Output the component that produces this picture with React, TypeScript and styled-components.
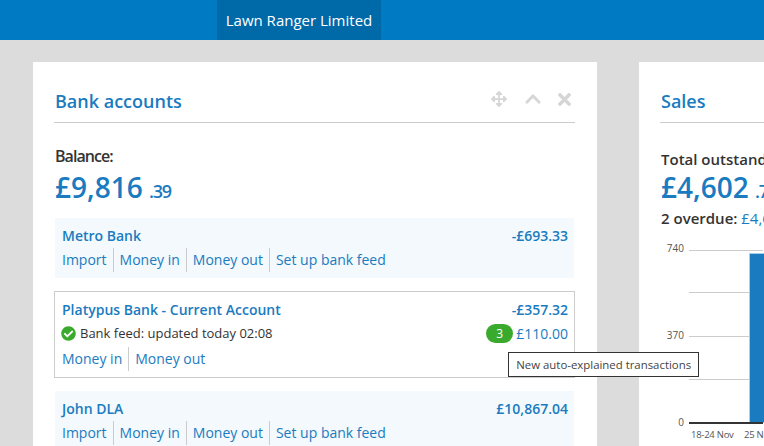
import { createGlobalStyle, styled } from "styled-components";
import { FaArrowsAlt, FaCheckCircle, FaChevronUp, FaTimes } from "react-icons/fa";

const BLUE = "#1a7bc0";

const GlobalStyle = createGlobalStyle`
  html, body {
    margin: 0;
    height: 100%;
    overflow: hidden;
    background: #dcdcdc;
    font-family: "Open Sans", "Liberation Sans", sans-serif;
    color: #333;
  }
`;

type Account = {
  name: string;
  amount: string;
  links: string[];
};

const metro: Account = {
  name: "Metro Bank",
  amount: "-£693.33",
  links: ["Import", "Money in", "Money out", "Set up bank feed"],
};

const john: Account = {
  name: "John DLA",
  amount: "£10,867.04",
  links: ["Import", "Money in", "Money out", "Set up bank feed"],
};

function Links({ items }: { items: string[] }) {
  return (
    <LinkRow>
      {items.map((item) => (
        <ActionLink key={item}>{item}</ActionLink>
      ))}
    </LinkRow>
  );
}

function Chart() {
  const grid = [9.5, 51.5, 95.5, 138.5];
  return (
    <ChartSvg width="103" height="205" viewBox="0 0 103 205">
      {grid.map((y) => (
        <line key={y} x1="29" x2="103" y1={y} y2={y} stroke="#ccc" />
      ))}
      <rect x="89.5" y="12.5" width="15" height="169" fill="#1a7bc0" stroke="#a9cde6" />
      <line x1="29" x2="103" y1="182" y2="182" stroke="#333" strokeWidth="2" />
      <g fontSize="10" fill="#555" fontFamily="Open Sans">
        <text x="24" y="11" textAnchor="end">740</text>
        <text x="24" y="98" textAnchor="end">370</text>
        <text x="24" y="185" textAnchor="end">0</text>
      </g>
      <g fontSize="9.5" fill="#555" fontFamily="Open Sans" letterSpacing="-0.25">
        <text x="31" y="197">18-24 Nov</text>
        <text x="84" y="197">25 Nov</text>
      </g>
    </ChartSvg>
  );
}

export default function App() {
  return (
    <>
      <GlobalStyle />
      <Header>
        <CompanyTab>Lawn Ranger Limited</CompanyTab>
      </Header>
      <Main>
        <Card>
          <CardHead>
            <CardTitle>Bank accounts</CardTitle>
            <CardTools>
              <FaArrowsAlt size={16} />
              <FaChevronUp size={18} />
              <FaTimes size={19} />
            </CardTools>
          </CardHead>
          <BalanceLabel>Balance:</BalanceLabel>
          <BigAmount>
            £9,816 <small>.39</small>
          </BigAmount>
          <AccountList>
            <AccountRow>
              <AccountTop>
                <span>{metro.name}</span>
                <span>{metro.amount}</span>
              </AccountTop>
              <Links items={metro.links} />
            </AccountRow>
            <AccountRow $outlined>
              <AccountTop>
                <span>Platypus Bank - Current Account</span>
                <span>-£357.32</span>
              </AccountTop>
              <FeedRow>
                <FeedStatus>
                  <FaCheckCircle size={15} color="#3aaa2c" />
                  Bank feed: updated today 02:08
                </FeedStatus>
                <FeedAmount>
                  <Badge>3</Badge>
                  £110.00
                  <Tooltip>New auto-explained transactions</Tooltip>
                </FeedAmount>
              </FeedRow>
              <Links items={["Money in", "Money out"]} />
            </AccountRow>
            <AccountRow>
              <AccountTop>
                <span>{john.name}</span>
                <span>{john.amount}</span>
              </AccountTop>
              <Links items={john.links} />
            </AccountRow>
          </AccountList>
        </Card>
        <Card>
          <CardHead>
            <CardTitle>Sales</CardTitle>
          </CardHead>
          <SalesLabel>Total outstanding:</SalesLabel>
          <BigAmount>
            £4,602 <small>.78</small>
          </BigAmount>
          <Overdue>
            2 overdue: <span>£4,602.78</span>
          </Overdue>
          <Chart />
        </Card>
      </Main>
    </>
  );
}

const Header = styled.header`
  display: flex;
  height: 40px;
  padding-left: 217px;
  background: #007bc3;
`;

const CompanyTab = styled.div`
  display: flex;
  align-items: center;
  justify-content: center;
  width: 164px;
  background: #0069a8;
  color: #fff;
  font-size: 15px;
`;

const Main = styled.main`
  display: flex;
  gap: 42px;
  box-sizing: border-box;
  width: 100vw;
  height: calc(100vh - 40px);
  padding: 22px 0 0 33px;
  overflow: hidden;
`;

const Card = styled.section`
  flex: none;
  box-sizing: border-box;
  width: 564px;
  height: 500px;
  padding: 22px 22px 0 21px;
  background: #fff;
`;

const CardHead = styled.div`
  display: flex;
  justify-content: space-between;
  align-items: center;
  height: 38px;
  border-bottom: 1px solid #ccc;
  padding-left: 1px;
`;

const CardTitle = styled.h2`
  margin: 0 0 4px;
  color: ${BLUE};
  font-size: 18px;
  font-weight: 600;
  line-height: 34px;
`;

const CardTools = styled.div`
  display: flex;
  align-items: center;
  gap: 13px;
  padding-right: 1px;
  margin-bottom: 8px;
  color: #d6d6d6;
  svg:first-child {
    margin-right: 4px;
  }
`;

const BalanceLabel = styled.div`
  margin: 23px 0 0 1px;
  font-size: 16px;
  font-weight: 600;
  line-height: 20px;
  letter-spacing: -0.95px;
`;

const SalesLabel = styled(BalanceLabel)`
  margin: 26px 0 -3px 1px;
  font-size: 15px;
  letter-spacing: 0;
  white-space: nowrap;
`;

const BigAmount = styled.div`
  margin-left: 1px;
  color: ${BLUE};
  font-size: 28px;
  font-weight: 600;
  line-height: 42px;
  white-space: nowrap;
  small {
    margin-left: -1px;
    font-size: 18px;
    letter-spacing: -1.2px;
  }
`;

const Overdue = styled.div`
  margin: -4px 0 0 1px;
  font-size: 15px;
  font-weight: 600;
  line-height: 20px;
  white-space: nowrap;
  span {
    color: ${BLUE};
    font-weight: 400;
  }
`;

const AccountList = styled.div`
  display: flex;
  flex-direction: column;
  gap: 13px;
  margin-top: 6px;
`;

const AccountRow = styled.div<{ $outlined?: boolean }>`
  box-sizing: border-box;
  padding: 7px 6px 6px 7px;
  margin: 0 ${(p) => (p.$outlined ? "0" : "1px")};
  background: ${(p) => (p.$outlined ? "#fff" : "#f3f9fc")};
  border: ${(p) => (p.$outlined ? "1px solid #ccc" : "none")};
`;

const AccountTop = styled.div`
  display: flex;
  justify-content: space-between;
  color: ${BLUE};
  font-size: 14px;
  font-weight: 600;
  line-height: 22px;
`;

const LinkRow = styled.div`
  display: flex;
  margin-top: 1px;
`;

const ActionLink = styled.a`
  padding: 0 6px;
  border-left: 1px solid #ccc;
  color: ${BLUE};
  font-size: 14px;
  line-height: 24px;
  &:first-child {
    padding-left: 0;
    border-left: none;
  }
`;

const FeedRow = styled.div`
  display: flex;
  justify-content: space-between;
  align-items: center;
  line-height: 25px;
`;

const FeedStatus = styled.div`
  display: flex;
  align-items: center;
  gap: 4px;
  margin-left: -1px;
  font-size: 13px;
`;

const FeedAmount = styled.div`
  position: relative;
  display: flex;
  align-items: center;
  gap: 3px;
  color: ${BLUE};
  font-size: 14px;
`;

const Badge = styled.span`
  display: inline-flex;
  justify-content: center;
  align-items: center;
  width: 27px;
  height: 19px;
  border-radius: 10px;
  background: #3aaa2c;
  color: #fff;
  font-size: 12px;
`;

const Tooltip = styled.div`
  position: absolute;
  top: 31px;
  left: 22px;
  z-index: 5;
  padding: 0 7px;
  background: #fff;
  border: 1px solid #333;
  color: #444;
  font-size: 11.4px;
  line-height: 23px;
  white-space: nowrap;
`;

const ChartSvg = styled.svg`
  display: block;
  margin-top: 13px;
  overflow: visible;
`;
